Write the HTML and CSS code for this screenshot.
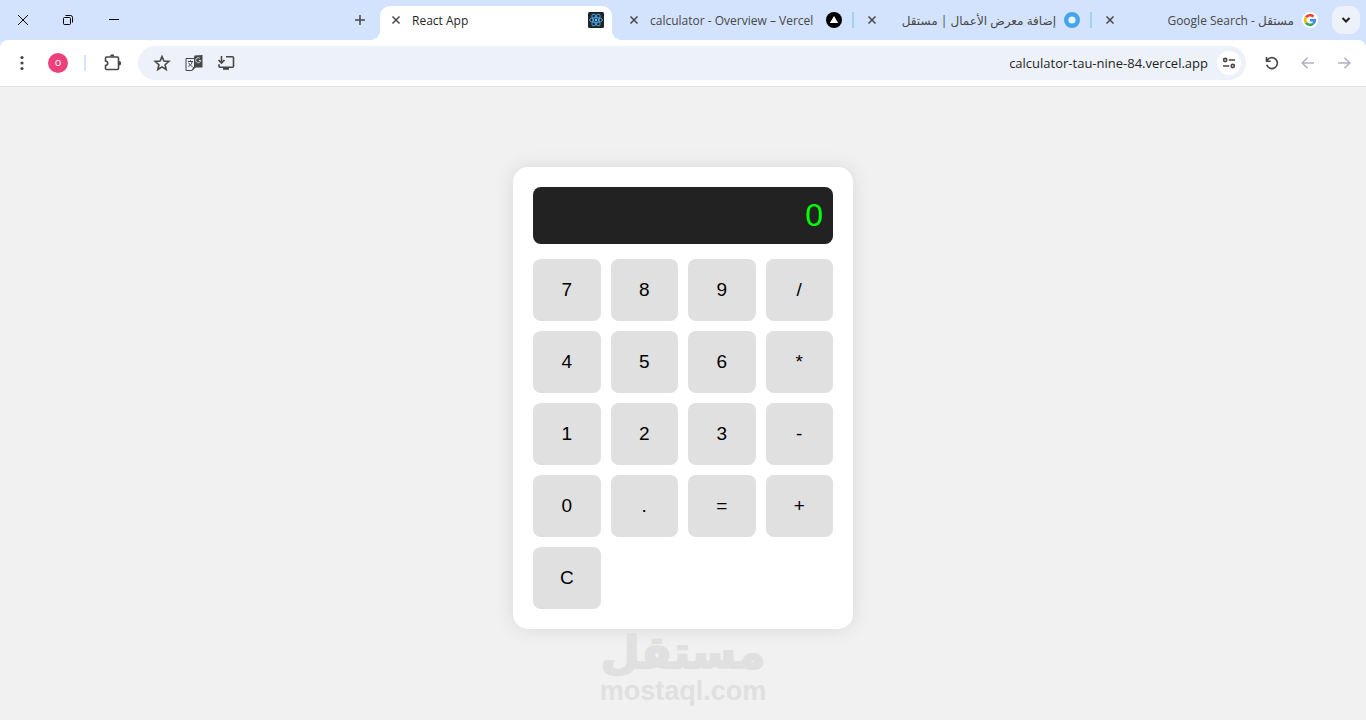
FILE: index.html
```html
<!DOCTYPE html>
<html lang="en">
<head>
    <meta charset="UTF-8">
    <meta name="viewport" content="width=device-width, initial-scale=1">
    <title>React App</title>
    <link rel="stylesheet" href="styles.css">
</head>
<body>
<header class="browser">
    <div class="tab-strip">
        <div class="window-controls">
            <button type="button" aria-label="Close window">
                <svg width="12" height="12" viewBox="0 0 12 12"><path d="M1 1l10 10M11 1L1 11"/></svg>
            </button>
            <button type="button" aria-label="Restore window">
                <svg width="12" height="12" viewBox="0 0 12 12"><rect x="1.5" y="3.5" width="7" height="7" rx="1"/><path d="M3.5 1.5h5a2 2 0 0 1 2 2v5"/></svg>
            </button>
            <button type="button" aria-label="Minimize window">
                <svg width="12" height="12" viewBox="0 0 12 12"><path d="M1 5.5h10"/></svg>
            </button>
        </div>
        <button type="button" class="new-tab" aria-label="New tab">
            <svg width="12" height="12" viewBox="0 0 12 12"><path d="M6 1v10M1 6h10"/></svg>
        </button>
        <div class="tabs">
            <div class="tab active">
                <button type="button" class="close" aria-label="Close tab">
                    <svg width="10" height="10" viewBox="0 0 10 10"><path d="M1.5 1.5l7 7M8.5 1.5l-7 7"/></svg>
                </button>
                <span class="title">React App</span>
                <svg class="favicon" viewBox="0 0 16 16">
                    <rect width="16" height="16" rx="1.5" fill="#20232a"/>
                    <g fill="none" stroke="#4aa3df">
                        <ellipse cx="8" cy="8" rx="6.5" ry="2.5"/>
                        <ellipse cx="8" cy="8" rx="6.5" ry="2.5" transform="rotate(60 8 8)"/>
                        <ellipse cx="8" cy="8" rx="6.5" ry="2.5" transform="rotate(120 8 8)"/>
                    </g>
                    <circle cx="8" cy="8" r="1.2" fill="#61dafb"/>
                </svg>
            </div>
            <div class="tab">
                <button type="button" class="close" aria-label="Close tab">
                    <svg width="10" height="10" viewBox="0 0 10 10"><path d="M1.5 1.5l7 7M8.5 1.5l-7 7"/></svg>
                </button>
                <span class="title">calculator - Overview – Vercel</span>
                <svg class="favicon" viewBox="0 0 16 16">
                    <circle cx="8" cy="8" r="8" fill="#000"/>
                    <path d="M8 4l4.2 7H3.8z" fill="#fff"/>
                </svg>
            </div>
            <div class="tab">
                <button type="button" class="close" aria-label="Close tab">
                    <svg width="10" height="10" viewBox="0 0 10 10"><path d="M1.5 1.5l7 7M8.5 1.5l-7 7"/></svg>
                </button>
                <span class="title" dir="rtl" lang="ar">إضافة معرض الأعمال | مستقل</span>
                <svg class="favicon" viewBox="0 0 16 16">
                    <circle cx="8" cy="8" r="5.8" fill="#e8f2fd" stroke="#41a5e8" stroke-width="4.4"/>
                </svg>
            </div>
            <div class="tab">
                <button type="button" class="close" aria-label="Close tab">
                    <svg width="10" height="10" viewBox="0 0 10 10"><path d="M1.5 1.5l7 7M8.5 1.5l-7 7"/></svg>
                </button>
                <span class="title" dir="rtl" lang="ar">مستقل - Google Search</span>
                <svg class="favicon" viewBox="0 0 16 16">
                    <circle cx="8" cy="8" r="8" fill="#fff"/>
                    <g fill="none" stroke-width="2.6">
                        <path d="M4 5.3A4.8 4.8 0 0 1 11.5 4.7" stroke="#ea4335"/>
                        <path d="M4 10.7A4.8 4.8 0 0 1 4 5.3" stroke="#fbbc05"/>
                        <path d="M11.2 11.6A4.8 4.8 0 0 1 4 10.7" stroke="#34a853"/>
                        <path d="M8 8.2h4.8a4.8 4.8 0 0 1-1.6 3.4" stroke="#4285f4"/>
                    </g>
                </svg>
            </div>
        </div>
        <button type="button" class="tab-search" aria-label="Search tabs">
            <svg width="10" height="10" viewBox="0 0 10 10"><path d="M1.5 3l3.5 3.5L8.5 3"/></svg>
        </button>
    </div>

    <div class="toolbar">
        <button type="button" class="icon" aria-label="Menu">
            <svg width="20" height="20" viewBox="0 0 20 20"><g fill="#474747" stroke="none"><circle cx="10" cy="4.5" r="1.6"/><circle cx="10" cy="10" r="1.6"/><circle cx="10" cy="15.5" r="1.6"/></g></svg>
        </button>
        <button type="button" class="icon" aria-label="Profile"><span class="avatar">o</span></button>
        <span class="divider"></span>
        <button type="button" class="icon" aria-label="Extensions">
            <svg width="20" height="20" viewBox="0 0 20 20">
                <path d="M4.500 4h11a1 1 0 0 1 1 1v10.500a1 1 0 0 1-1 1h-11a1 1 0 0 1-1-1V12.500c3-.5 3-4 0-4.500V5a1 1 0 0 1 1-1z"/>
                <path d="M8 3.500a2.200 2.200 0 0 1 4.400 0zM17 8a2.200 2.200 0 0 1 0 4.400z" fill="#474747" stroke="none"/>
            </svg>
        </button>
        <div class="address">
            <button type="button" class="action" aria-label="Bookmark this tab">
                <svg width="20" height="20" viewBox="0 0 20 20"><path d="M10 3.600l1.900 4.500 4.900.4-3.700 3.200 1.100 4.800-4.200-2.600-4.200 2.600 1.100-4.800-3.700-3.200 4.900-.4z"/></svg>
            </button>
            <button type="button" class="action" aria-label="Translate this page">
                <svg width="20" height="20" viewBox="0 0 20 20">
                    <path d="M10.500 2.500l8-.5v12.500H8z" fill="#474747" stroke="none"/>
                    <path d="M2 5.500h8.500v8.500L8 17.500H2z" stroke-width="1" fill="#edf1fa"/>
                    <path d="M4 8.500h5M6.500 7.200v1.300M8.300 8.500c-.6 2.400-2 4-4 5M4.700 9.800c.8 1.700 2 2.900 3.800 3.700" stroke-width="1"/>
                    <path d="M9 14h3l-4 4z" fill="#474747" stroke="none"/>
                    <path d="M14.800 7.500h1.900a2.500 2.500 0 1 1-.9-2.200" stroke="#dfe3ec" stroke-width="1"/>
                </svg>
            </button>
            <button type="button" class="action" aria-label="Install app">
                <svg width="20" height="20" viewBox="0 0 20 20"><path d="M10 3.800h6.500a1 1 0 0 1 1 1v8.400a1 1 0 0 1-1 1H4a1 1 0 0 1-1-1v-2M5.500 3v6.500M2.500 7l3 3 3-3"/><path d="M7 14h6v2.800H7z" fill="#474747" stroke="none"/></svg>
            </button>
            <input type="text" class="url" aria-label="Address" value="calculator-tau-nine-84.vercel.app">
            <button type="button" class="site-info" aria-label="Site information">
                <svg width="14" height="14" viewBox="0 0 14 14"><circle cx="3.200" cy="4" r="1.600"/><path d="M6.800 4H13M1 10h6.200"/><circle cx="10.800" cy="10" r="1.600"/></svg>
            </button>
        </div>
        <button type="button" class="icon" aria-label="Reload">
            <svg width="20" height="20" viewBox="0 0 20 20"><path d="M4.500 4v4.200h4.200M5 7.500a5.500 5.500 0 1 1-.4 4.300"/></svg>
        </button>
        <button type="button" class="icon" aria-label="Back" disabled>
            <svg width="20" height="20" viewBox="0 0 20 20"><path d="M16 10H4.500M9.500 4.700L4.200 10l5.300 5.300"/></svg>
        </button>
        <button type="button" class="icon" aria-label="Forward" disabled>
            <svg width="20" height="20" viewBox="0 0 20 20"><path d="M4 10h11.500M10.500 4.700l5.300 5.300-5.300 5.300"/></svg>
        </button>
    </div>
</header>

<main class="page">
    <div class="calculator">
        <output class="display">0</output>
        <div class="buttons">
            <button type="button">7</button>
            <button type="button">8</button>
            <button type="button">9</button>
            <button type="button">/</button>
            <button type="button">4</button>
            <button type="button">5</button>
            <button type="button">6</button>
            <button type="button">*</button>
            <button type="button">1</button>
            <button type="button">2</button>
            <button type="button">3</button>
            <button type="button">-</button>
            <button type="button">0</button>
            <button type="button">.</button>
            <button type="button">=</button>
            <button type="button">+</button>
            <button type="button">C</button>
        </div>
    </div>
    <div class="watermark">
        <span class="mark" lang="ar" dir="rtl">مستقل</span>
        <span class="domain">mostaql.com</span>
    </div>
</main>
</body>
</html>
```
FILE: styles.css
```css
* {
    box-sizing: border-box;
}
body {
    margin: 0;
    min-height: 100vh;
    background-color: #f1f1f1;
    font-family: "Liberation Sans", Arial, sans-serif;
}
button {
    padding: 0;
    border: none;
    background: none;
    font: inherit;
    color: inherit;
    cursor: pointer;
}
svg {
    display: block;
    fill: none;
    stroke: #474747;
}

/* browser */
.browser {
    background-color: #d3e3fd;
    font-family: "Open Sans", "DejaVu Sans", sans-serif;
}
.browser button {
    display: flex;
    flex: none;
    align-items: center;
    justify-content: center;
}
.tab-strip {
    display: flex;
    height: 40px;
    padding-right: 6px;
}
.window-controls {
    display: flex;
}
.window-controls button {
    width: 46px;
}
.window-controls button:first-child {
    width: 45px;
}
.window-controls svg {
    stroke: #000;
}
.new-tab {
    width: 28px;
    margin-left: auto;
    margin-right: 6px;
}
.new-tab svg {
    stroke-width: 1.5;
}
.tabs {
    display: flex;
    gap: 6px;
    padding-top: 6px;
}
.tab {
    position: relative;
    display: flex;
    align-items: center;
    gap: 8px;
    width: 232px;
    padding: 0 8px 6px;
    color: #474747;
    font-size: 12px;
}
.tab.active {
    background-color: #fff;
    border-radius: 10px 10px 0 0;
    color: #1f1f1f;
}
.tab.active::before,
.tab.active::after {
    content: "";
    position: absolute;
    bottom: 0;
    left: -10px;
    width: 10px;
    height: 10px;
    background: radial-gradient(circle at 0 0, transparent 10px, #fff 10px);
}
.tab.active::after {
    left: 100%;
    background: radial-gradient(circle at 100% 0, transparent 10px, #fff 10px);
}
.tab:nth-child(n + 3)::before {
    content: "";
    position: absolute;
    top: 6px;
    left: -4px;
    width: 2px;
    height: 16px;
    background-color: #a0d2f5;
}
.close {
    width: 16px;
    height: 16px;
}
.close svg {
    stroke-width: 1.5;
}
.title {
    flex: 1;
    overflow: hidden;
    white-space: nowrap;
}
.favicon {
    flex: none;
    width: 16px;
    height: 16px;
    stroke: none;
}
.tab-search {
    width: 28px;
    height: 28px;
    margin: 6px 0 0 6px;
    border-radius: 10px;
}
.browser .tab-search {
    background-color: #edf1fa;
}
.tab-search svg {
    stroke: #1f1f1f;
    stroke-width: 2;
}

.toolbar {
    display: flex;
    align-items: center;
    gap: 8px;
    height: 47px;
    padding: 0 8px;
    background-color: #fff;
    border-bottom: 1px solid #e0e0e0;
    border-radius: 8px 8px 0 0;
}
.icon {
    width: 28px;
    height: 28px;
}
.toolbar svg {
    stroke-width: 1.6;
}
.icon:disabled svg {
    stroke: #aeb3c0;
}
.avatar {
    width: 20px;
    height: 20px;
    border-radius: 50%;
    background-color: #ec407a;
    color: #fff;
    font-size: 11px;
    line-height: 18px;
    text-align: center;
}
.divider {
    width: 2px;
    height: 16px;
    margin: 0 4px;
    background-color: #d3e3fd;
}
.address {
    display: flex;
    flex: 1;
    align-items: center;
    height: 34px;
    margin: 0 4px;
    padding: 0 5px 0 8px;
    border-radius: 17px;
    background-color: #edf1fa;
}
.action {
    width: 32px;
    height: 32px;
}
.url {
    flex: 1;
    min-width: 0;
    padding: 0 9px;
    border: none;
    outline: none;
    background: none;
    color: #1f1f1f;
    font-family: inherit;
    font-size: 13px;
    text-align: right;
}
.site-info {
    width: 24px;
    height: 24px;
    border-radius: 50%;
}
.browser .site-info {
    background-color: #fff;
}

/* calculator */
.page {
    display: flex;
    flex-direction: column;
    align-items: center;
    padding-top: 80px;
}
.calculator {
    width: 340px;
    padding: 20px;
    border-radius: 15px;
    background-color: #fff;
    box-shadow: 0 0 20px rgba(0, 0, 0, .1);
}
.display {
    display: block;
    margin-bottom: 15px;
    padding: 10px;
    border-radius: 8px;
    background-color: #222;
    color: #0f0;
    font-size: 32px;
    line-height: 37px;
    text-align: right;
}
.buttons {
    display: grid;
    grid-template-columns: repeat(4, 1fr);
    gap: 10px;
}
.buttons button {
    padding: 20px 0;
    border-radius: 8px;
    background-color: #e0e0e0;
    color: #000;
    font-size: 19px;
    line-height: 22px;
}

.watermark {
    display: flex;
    flex-direction: column;
    align-items: center;
    color: #e0e0e0;
    font-weight: bold;
}
.mark {
    font-family: "DejaVu Sans", sans-serif;
    font-size: 45px;
    line-height: 48px;
    -webkit-text-stroke: 2px #e0e0e0;
}
.domain {
    font-size: 27px;
    line-height: 28px;
}
```
